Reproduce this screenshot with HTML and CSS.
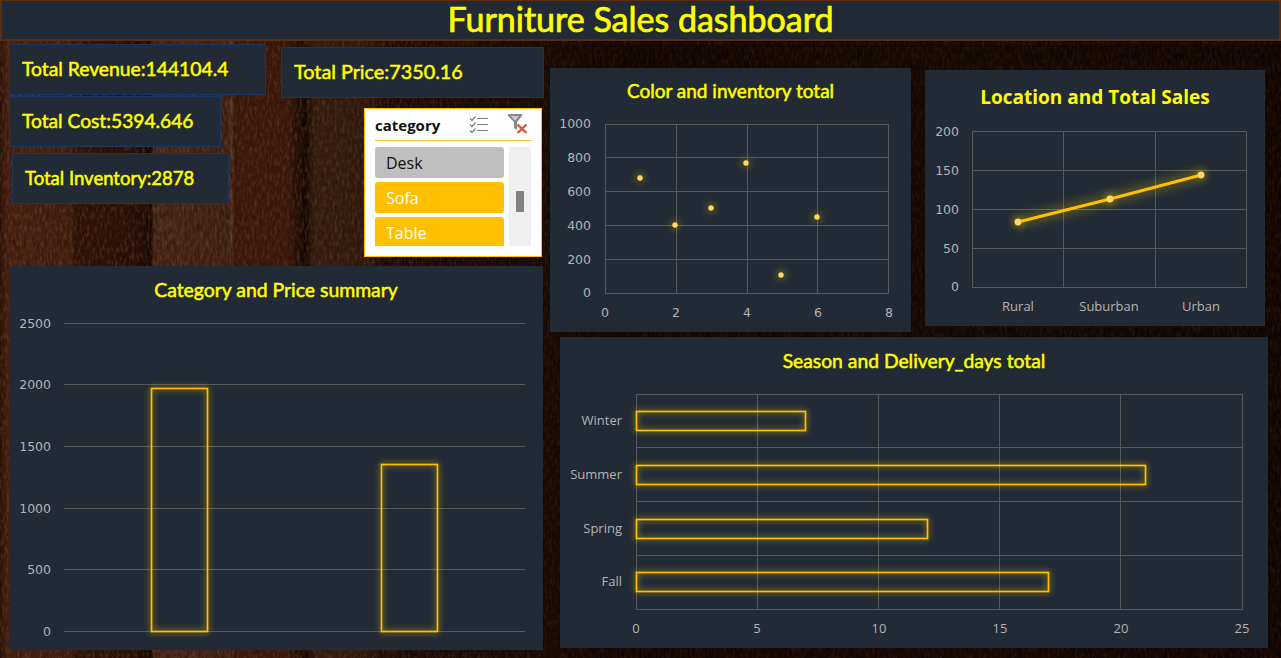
FILE: index.html
```html
<!DOCTYPE html>
<html lang="en">
<head>
<meta charset="utf-8">
<title>Furniture Sales dashboard</title>
<link rel="stylesheet" href="styles.css">
</head>
<body>
<svg class="wood" width="1281" height="658" aria-hidden="true">
  <defs>
    <linearGradient id="planks" x1="0" x2="1" y1="0" y2="0">
      <stop offset="0" stop-color="#2a120b"/>
      <stop offset="0.006" stop-color="#54291a"/>
      <stop offset="0.056" stop-color="#4f2617"/>
      <stop offset="0.058" stop-color="#33130b"/>
      <stop offset="0.105" stop-color="#2c0f08"/>
      <stop offset="0.118" stop-color="#0e0403"/>
      <stop offset="0.12" stop-color="#5a3322"/>
      <stop offset="0.178" stop-color="#53301f"/>
      <stop offset="0.181" stop-color="#6d4636"/>
      <stop offset="0.183" stop-color="#4c1f12"/>
      <stop offset="0.225" stop-color="#4a1e11"/>
      <stop offset="0.238" stop-color="#0a0302"/>
      <stop offset="0.246" stop-color="#45271a"/>
      <stop offset="0.285" stop-color="#3a2015"/>
      <stop offset="0.3" stop-color="#1e0c07"/>
      <stop offset="0.43" stop-color="#26110a"/>
      <stop offset="0.5" stop-color="#1a0a06"/>
      <stop offset="0.7" stop-color="#21100a"/>
      <stop offset="1" stop-color="#170806"/>
    </linearGradient>
    <linearGradient id="shade" x1="0" x2="1" y1="0" y2="0">
      <stop offset="0" stop-color="#060201" stop-opacity="0.15"/>
      <stop offset="0.3" stop-color="#060201" stop-opacity="0.25"/>
      <stop offset="0.45" stop-color="#060201" stop-opacity="0.6"/>
      <stop offset="1" stop-color="#060201" stop-opacity="0.6"/>
    </linearGradient>
    <filter id="grain" x="0" y="0" width="100%" height="100%">
      <feTurbulence type="fractalNoise" baseFrequency="0.45 0.1" numOctaves="3" seed="7"/>
      <feColorMatrix type="matrix" values="0 0 0 0 0.05  0 0 0 0 0.01  0 0 0 0 0  1.8 0 0 0 -0.6"/>
    </filter>
    <filter id="flecks" x="0" y="0" width="100%" height="100%">
      <feTurbulence type="fractalNoise" baseFrequency="0.4 0.15" numOctaves="2" seed="21"/>
      <feColorMatrix type="matrix" values="0 0 0 0 0.42  0 0 0 0 0.18  0 0 0 0 0.1  0 0.8 0 0 -0.36"/>
    </filter>
  </defs>
  <rect width="1281" height="658" fill="url(#planks)"/>
  <rect width="1281" height="658" filter="url(#grain)"/>
  <rect width="1281" height="658" filter="url(#flecks)"/>
  <rect width="1281" height="658" fill="url(#shade)"/>
</svg>

<header class="banner"><h1 class="banner-title hand">Furniture Sales dashboard</h1></header>

<main class="board">
  <section class="left">
    <div class="left-top">
      <div class="kpis">
        <div class="kpi kpi-revenue hand">Total Revenue:144104.4</div>
        <div class="kpi kpi-cost hand">Total Cost:5394.646</div>
        <div class="kpi kpi-inventory hand">Total Inventory:2878</div>
      </div>
      <div class="side">
        <div class="kpi kpi-price hand">Total Price:7350.16</div>
        <div class="slicer">
          <div class="slicer-head">
            <span class="slicer-name">category</span>
            <svg class="slicer-check" width="20" height="20" viewBox="0 0 20 20" aria-hidden="true">
              <path d="M1 3.5 3 5.5 6.5 1.5M1 9.5 3 11.5 6.5 7.5M1 15.5 3 17.5 6.5 13.5" fill="none" stroke="#7f7f7f" stroke-width="1.3"/>
              <path d="M8 3.5H19M8 9.5H19M8 15.5H19" stroke="#7f7f7f" stroke-width="1.2"/>
            </svg>
            <svg class="slicer-clear" width="22" height="21" viewBox="0 0 22 21" aria-hidden="true">
              <path d="M1 1H15V3L10 9V17L7 15V9L1 3Z" fill="#8a8a8a"/>
              <path d="M4 3H12L9 7H7Z" fill="#c9c9c9"/>
              <path d="M10.5 11.5 19.5 20M19.5 11.5 10.5 20" stroke="#d9553a" stroke-width="2.4"/>
            </svg>
          </div>
          <div class="slicer-body">
            <div class="slicer-items">
              <div class="slicer-item is-off">Desk</div>
              <div class="slicer-item">Sofa</div>
              <div class="slicer-item is-cut">Table</div>
            </div>
            <div class="slicer-scroll"><div class="slicer-thumb"></div></div>
          </div>
        </div>
      </div>
    </div>

    <article class="card card-category">
      <h2 class="card-title hand title-category">Category and Price summary</h2>
      <svg class="plot" width="534" height="336" viewBox="9 314 534 336">
        <g class="grid">
          <path d="M64 323.5H525M64 384.5H525M64 446.5H525M64 508.5H525M64 569.5H525M64 631.5H525"/>
        </g>
        <g class="axis axis-wide" text-anchor="end">
          <text x="51" y="328">2500</text><text x="51" y="389">2000</text><text x="51" y="451">1500</text>
          <text x="51" y="513">1000</text><text x="51" y="574">500</text><text x="51" y="636">0</text>
        </g>
        <rect class="bar" x="151.5" y="388.5" width="56" height="243"/>
        <rect class="bar" x="381.5" y="464.5" width="56" height="167"/>
      </svg>
    </article>
  </section>

  <section class="right">
    <div class="right-top">
      <article class="card card-scatter">
        <h2 class="card-title hand title-scatter">Color and inventory total</h2>
        <svg class="plot" width="361" height="218" viewBox="550 114 361 218">
          <g class="grid">
            <path d="M605.5 124.5H888.5V293.5H605.5ZM605.5 157.5H888.5M605.5 191.5H888.5M605.5 225.5H888.5M605.5 259.5H888.5M676.5 124.5V293.5M747.5 124.5V293.5M817.5 124.5V293.5"/>
          </g>
          <g class="axis axis-wide" text-anchor="end">
            <text x="591" y="128">1000</text><text x="591" y="162">800</text><text x="591" y="196">600</text>
            <text x="591" y="230">400</text><text x="591" y="264">200</text><text x="591" y="297">0</text>
          </g>
          <g class="axis axis-wide" text-anchor="middle">
            <text x="605" y="317">0</text><text x="676" y="317">2</text><text x="747" y="317">4</text>
            <text x="818" y="317">6</text><text x="889" y="317">8</text>
          </g>
          <g class="dots">
            <circle cx="640" cy="178" r="2.7"/><circle cx="675" cy="225" r="2.7"/><circle cx="711" cy="208" r="2.7"/>
            <circle cx="746" cy="163" r="2.7"/><circle cx="781" cy="275" r="2.7"/><circle cx="817" cy="217" r="2.7"/>
          </g>
        </svg>
      </article>

      <article class="card card-line">
        <h2 class="card-title title-line">Location and Total Sales</h2>
        <svg class="plot" width="340" height="202" viewBox="925 124 340 202">
          <g class="grid">
            <path d="M972.5 131.5H1246.5V287.5H972.5ZM972.5 170.5H1246.5M972.5 209.5H1246.5M972.5 248.5H1246.5M1063.5 131.5V287.5M1155.5 131.5V287.5"/>
          </g>
          <g class="axis axis-wide" text-anchor="end">
            <text x="959" y="136">200</text><text x="959" y="175">150</text><text x="959" y="214">100</text>
            <text x="959" y="253">50</text><text x="959" y="291">0</text>
          </g>
          <g class="axis axis-name" text-anchor="middle">
            <text x="1018" y="311">Rural</text><text x="1109" y="311">Suburban</text><text x="1201" y="311">Urban</text>
          </g>
          <polyline class="line" points="1018,222 1110,199 1201,175"/>
          <g class="dots">
            <circle cx="1018" cy="222" r="3.4"/><circle cx="1110" cy="199" r="3.4"/><circle cx="1201" cy="175" r="3.4"/>
          </g>
        </svg>
      </article>
    </div>

    <article class="card card-season">
      <h2 class="card-title hand title-season">Season and Delivery_days total</h2>
      <svg class="plot" width="708" height="263" viewBox="560 385 708 263">
        <g class="grid">
          <path d="M636.5 394.5H1242.5V609.5H636.5ZM636.5 447.5H1242.5M636.5 501.5H1242.5M636.5 555.5H1242.5M757.5 394.5V609.5M878.5 394.5V609.5M999.5 394.5V609.5M1120.5 394.5V609.5"/>
        </g>
        <g class="axis axis-name" text-anchor="end">
          <text x="622" y="425">Winter</text><text x="622" y="479">Summer</text>
          <text x="622" y="533">Spring</text><text x="622" y="586">Fall</text>
        </g>
        <g class="axis axis-name" text-anchor="middle">
          <text x="636" y="633">0</text><text x="757" y="633">5</text><text x="879" y="633">10</text>
          <text x="1000" y="633">15</text><text x="1121" y="633">20</text><text x="1242" y="633">25</text>
        </g>
        <rect class="bar" x="636.5" y="411.5" width="169" height="19"/>
        <rect class="bar" x="636.5" y="465.5" width="509" height="19"/>
        <rect class="bar" x="636.5" y="519.5" width="291" height="19"/>
        <rect class="bar" x="636.5" y="572.5" width="412" height="19"/>
      </svg>
    </article>
  </section>
</main>
</body>
</html>
```

FILE: styles.css
```css
* { box-sizing: border-box; }

html, body {
  margin: 0;
  padding: 0;
  width: 1281px;
  height: 658px;
  overflow: hidden;
  background: #1a0a06;
}

body {
  position: relative;
  font-family: "Open Sans", "Liberation Sans", sans-serif;
}

.wood {
  position: absolute;
  left: 0;
  top: 0;
  display: block;
}

.hand {
  font-family: "Lato", "Open Sans", sans-serif;
  font-weight: 400;
  color: #ffff00;
  -webkit-text-stroke: 0.5px #ffff00;
}

.banner {
  position: relative;
  height: 41px;
  display: flex;
  align-items: center;
  justify-content: center;
  background: #222a35;
  border: 2px solid #5b2c0d;
  border-top-width: 1px;
}

.banner-title {
  margin: 0 0 3px;
  font-size: 34px;
  font-weight: 400;
  line-height: 36px;
  -webkit-text-stroke: 0.7px #ffff00;
}

.board {
  position: relative;
  display: flex;
  padding-left: 9px;
  align-items: flex-start;
}

.left { width: 535px; flex: none; }

.left-top {
  display: flex;
  height: 225px;
}

.kpis {
  width: 272px;
  flex: none;
  display: flex;
  flex-direction: column;
  align-items: flex-start;
  padding-top: 3px;
}

.kpi {
  height: 51px;
  display: flex;
  align-items: center;
  background: #222a35;
  border: 1px solid #1d3660;
  white-space: nowrap;
}

.kpi-revenue { width: 257px; padding: 0 0 2px 12px; font-size: 19.3px; }
.kpi-cost { width: 212px; margin-top: 1px; padding: 0 0 2px 12px; font-size: 19.2px; }
.kpi-inventory { width: 217px; margin: 6px 0 0 3px; padding: 0 0 2px 12px; font-size: 18.5px; }
.kpi-price { width: 263px; padding: 0 0 3px 12px; font-size: 19.8px; }

.side {
  padding-top: 6px;
  width: 263px;
  flex: none;
}

.slicer {
  width: 178px;
  height: 149px;
  margin: 10px 0 0 83px;
  padding: 0 10px 0 10px;
  background: #fff;
  border: 1px solid #ffc000;
}

.slicer-head {
  height: 32px;
  display: flex;
  align-items: center;
  border-bottom: 1px solid #f3c030;
  padding-top: 1px;
}

.slicer-name {
  font-family: "Open Sans", sans-serif;
  font-weight: 700;
  font-size: 15px;
  color: #111;
  flex: 1;
}

.slicer-check { margin: -1px 18px 0 0; }
.slicer-clear { margin: -4px 2px 0 0; }

.slicer-body {
  display: flex;
  margin-top: 6px;
  height: 99px;
  gap: 5px;
}

.slicer-items {
  width: 129px;
  flex: none;
  display: flex;
  flex-direction: column;
  gap: 4px;
  overflow: hidden;
}

.slicer-item {
  height: 31px;
  flex: none;
  padding-left: 11px;
  display: flex;
  align-items: center;
  font-family: "Open Sans", sans-serif;
  font-size: 16px;
  color: #fff;
  background: #ffc000;
  border-radius: 3px;
}

.slicer-item.is-off { background: #bfbfbf; color: #111; }
.slicer-item.is-cut { border-radius: 3px 3px 0 0; }

.slicer-scroll {
  width: 22px;
  background: #efefef;
  padding: 44px 0 0 7px;
}

.slicer-thumb {
  width: 8px;
  height: 21px;
  background: #808080;
}

.card {
  display: flex;
  flex-direction: column;
  background: #222a35;
}

.card-title {
  margin: 0;
  display: flex;
  align-items: center;
  justify-content: center;
  flex: none;
  white-space: nowrap;
  font-size: 19px;
  font-weight: 400;
  padding-bottom: 2px;
}

.plot { display: block; flex: none; }

.card-category { width: 534px; height: 384px; }
.title-category { height: 48px; font-size: 19.4px; }

.right { width: 718px; margin-left: 6px; flex: none; }

.right-top {
  display: flex;
  align-items: flex-start;
  height: 291px;
}

.card-scatter { width: 361px; height: 264px; margin-top: 27px; }
.title-scatter { height: 46px; }

.card-line { width: 340px; height: 256px; margin: 29px 0 0 14px; }
.title-line {
  height: 54px;
  color: #ffff00;
  font-family: "Open Sans", sans-serif;
  font-weight: 700;
  font-size: 19px;
  padding-bottom: 0;
}

.card-season { width: 708px; height: 311px; margin: 5px 0 0 10px; }
.title-season { height: 48px; font-size: 19.3px; }

.grid path {
  fill: none;
  stroke: #595959;
  stroke-width: 1;
}

.axis text { fill: #b4b4b4; }
.axis-wide { font-family: "DejaVu Sans", sans-serif; font-size: 12.5px; }
.axis-name { font-family: "Open Sans", sans-serif; font-size: 13px; }

.bar {
  fill: none;
  stroke: #ffc000;
  stroke-width: 1.7;
  filter: drop-shadow(0 0 3px rgba(255, 214, 0, 0.85));
}

.line {
  fill: none;
  stroke: #ffc000;
  stroke-width: 3;
  filter: drop-shadow(0 0 6px rgba(255, 214, 0, 0.85));
}

.dots circle {
  fill: #ffd966;
  filter: drop-shadow(0 0 4px rgba(255, 214, 0, 0.9));
}
```
